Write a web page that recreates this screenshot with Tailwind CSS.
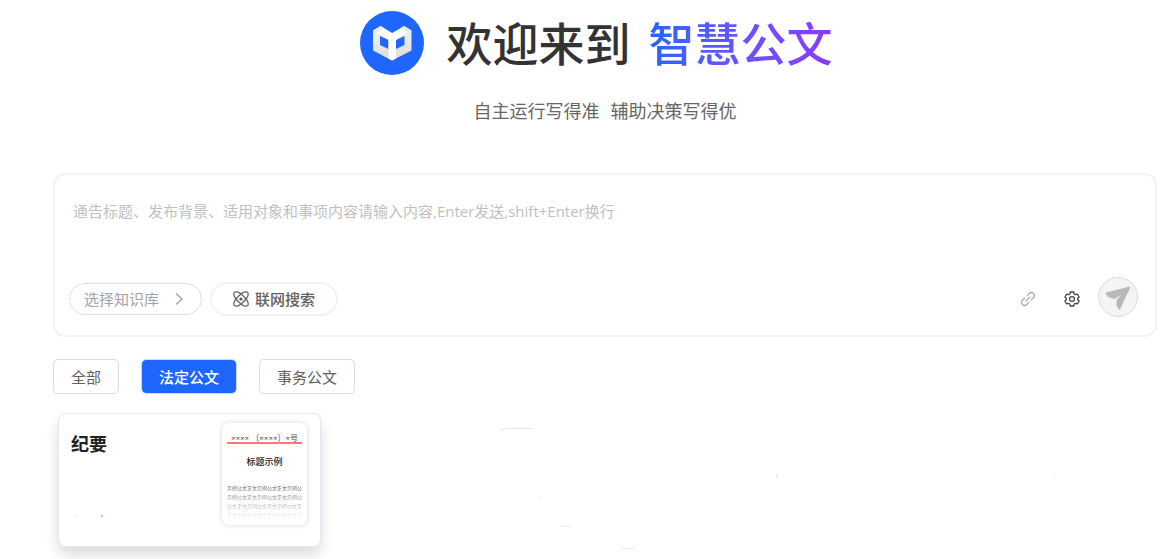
<!DOCTYPE html>
<html lang="zh-CN">
<head>
<meta charset="utf-8">
<meta name="viewport" content="width=device-width, initial-scale=1">
<title>智慧公文</title>
<script src="https://cdn.jsdelivr.net/npm/@tailwindcss/browser@4"></script>
</head>
<body class="min-h-screen overflow-hidden bg-white pl-[53px] pr-[14px] font-['Open_Sans','Noto_Sans_CJK_SC',sans-serif] text-[#606266]">
<header class="flex flex-col items-center pt-[11px]">
  <div class="flex h-16 items-center pr-[18px]">
    <svg class="size-16 shrink-0" viewBox="0 0 64 64" aria-hidden="true">
      <defs>
        <linearGradient id="lf" x1="0" y1="0" x2="0" y2="1"><stop offset="0" stop-color="#f0f0f1"/><stop offset="1" stop-color="#dcdcdd"/></linearGradient>
      </defs>
      <circle cx="32" cy="32" r="32" fill="#1f66ff"/>
      <path fill-rule="evenodd" fill="url(#lf)" d="M13 19.500L32 28V49.500L13 39.500ZM20 25V34L28.500 38V29Z"/>
      <path fill-rule="evenodd" fill="url(#lf)" d="M51.500 19.500L32 28V49.500L51.500 39.500ZM44.500 25V34L36 38V29Z"/>
      <path fill="#fff" d="M13 19.500L20.500 15L32.200 22L44 15L51.500 19.500L36 28.500V47.500L32.200 49.500L28.500 47.500V28.500Z"/>
      <path fill="#e9e9ea" d="M13 19.500L20.500 15L24 17L17 21.500ZM51.500 19.500L44 15L40.500 17L47.500 21.500Z"/>
    </svg>
    <h1 class="ml-[23px] flex gap-[18px] whitespace-nowrap text-[46px] leading-[62px] font-medium text-[#333]">
      <span>欢迎来到</span>
      <span class="bg-linear-to-r from-[#1f66ff] to-[#8a38ff] bg-clip-text text-transparent">智慧公文</span>
    </h1>
  </div>
  <p class="mt-6 flex gap-[11px] text-[18px] leading-6 text-[#666]"><span>自主运行写得准</span><span>辅助决策写得优</span></p>
</header>

<main>
  <form class="mt-[50px] flex flex-col rounded-xl border-2 border-[#f3f3f4] px-[14px] pt-[22px] pb-[18px]">
    <textarea aria-label="公文内容" rows="3" class="block h-20 w-full resize-none px-1 text-[15px] leading-7 outline-none placeholder:text-[#bfbfbf]" placeholder="通告标题、发布背景、适用对象和事项内容请输入内容,Enter发送,shift+Enter换行"></textarea>
    <div class="flex h-10 items-center">
      <button type="button" class="mt-1 flex h-8 items-center gap-3 rounded-full border border-[#dcdfe6] px-[14px] text-[15px] text-[#a0a3aa]">
        <span>选择知识库</span>
        <svg class="size-4" viewBox="0 0 16 16" fill="none" stroke="currentColor" stroke-width="1.400" aria-hidden="true"><path d="M5 2.500L11 8L5 13.500"/></svg>
      </button>
      <button type="button" class="mt-1 ml-2 flex h-[34px] items-center gap-[6px] rounded-full border-2 border-[#f3f3f4] px-[21px] text-[15px] font-medium text-[#606060]">
        <svg class="size-4" viewBox="0 0 16 16" fill="none" stroke="#666" stroke-width="1.300" aria-hidden="true">
          <path d="M8 3C10.500 .7 13.600 .3 14.600 1.400C15.700 2.500 15.300 5.500 13 8C15.300 10.500 15.700 13.500 14.600 14.600C13.600 15.700 10.500 15.300 8 13C5.500 15.300 2.400 15.700 1.400 14.600C.3 13.500 .7 10.500 3 8C.7 5.500 .3 2.500 1.400 1.400C2.400 .3 5.500 .7 8 3Z"/>
          <path d="M8 3C10 4.600 11.600 6.200 13 8C11.600 9.800 10 11.400 8 13C6 11.400 4.400 9.800 3 8C4.400 6.200 6 4.600 8 3Z"/>
          <circle cx="8" cy="8" r="1.600" fill="#555" stroke="none"/>
        </svg>
        <span>联网搜索</span>
      </button>
      <div class="ml-auto flex items-center">
        <button type="button" aria-label="添加链接" class="mt-1 p-0 text-[#aaa]">
          <svg class="size-4" viewBox="0 0 16 16" fill="none" stroke="currentColor" stroke-width="1.300" stroke-linecap="round" aria-hidden="true">
            <path d="M7.200 4.600L9.300 2.500A2.960 2.960 0 0 1 13.500 6.700L11.400 8.800M8.800 11.400L6.700 13.500A2.960 2.960 0 0 1 2.500 9.300L4.600 7.200M5.900 10.100L10.100 5.900"/>
          </svg>
        </button>
        <button type="button" aria-label="设置" class="mt-1 ml-7 p-0 text-[#444]">
          <svg class="size-4" viewBox="0 0 16 16" fill="none" stroke="currentColor" stroke-width="1.300" stroke-linejoin="round" aria-hidden="true">
            <path d="M6.300 1H9.700L10.200 3L11.400 3.700L13.400 3.100L15.100 6L13.600 7.400V8.600L15.100 10L13.400 12.900L11.400 12.300L10.200 13L9.700 15H6.300L5.800 13L4.600 12.300L2.600 12.900L.9 10L2.400 8.600V7.400L.9 6L2.600 3.100L4.600 3.700L5.800 3Z"/>
            <circle cx="8" cy="8" r="2.400"/>
          </svg>
        </button>
        <button type="submit" aria-label="发送" class="ml-[18px] mr-[3px] flex size-10 items-center justify-center rounded-full border border-[#dcdcdc] bg-[#f4f4f4]">
          <svg class="size-[26px]" viewBox="0 0 26 26" fill="#b8b8b8" stroke="#b8b8b8" stroke-linejoin="round" aria-hidden="true"><path d="M25 3L1 9L3 12.500L9.500 14.500L17 10L12 16.500L12 22L14.500 25.500Z"/></svg>
        </button>
      </div>
    </div>
  </form>

  <nav aria-label="公文类型" class="mt-[22px] flex gap-[22px] text-[15px] leading-5">
    <button type="button" class="h-[35px] rounded-[5px] border border-[#dcdcdc] px-[17px] text-[#606060]">全部</button>
    <button type="button" aria-pressed="true" class="h-[35px] rounded-[5px] border border-[#c9dafc] bg-[#1f66ff] bg-clip-padding px-[17px] font-medium text-white">法定公文</button>
    <button type="button" class="h-[35px] rounded-[5px] border border-[#dcdcdc] px-[17px] text-[#606060]">事务公文</button>
  </nav>

  <section class="mt-[19px] ml-[5px] flex items-start">
    <article class="flex h-[134px] w-[263px] shrink-0 justify-between rounded-[8px] border border-[#e6e7ee] bg-white pt-2 pr-3 pl-3 shadow-[0_8px_14px_rgba(0,0,0,0.14)]">
      <div class="flex flex-col">
        <h2 class="mt-2 text-[18px] leading-7 font-bold text-[#222]">纪要</h2>
        <svg class="mt-[54px] h-2 w-12" viewBox="0 0 48 8" aria-hidden="true"><circle cx="4" cy="4" r=".6" fill="#aac0ff"/><circle cx="31" cy="4" r=".8" fill="#3c66ff"/></svg>
      </div>
      <div class="flex h-[104px] w-[87px] flex-col overflow-hidden rounded-[8px] border border-[#eee] px-[5px] pt-[10px] shadow-[0_0_4px_rgba(0,0,0,0.12)]">
        <p class="border-b-2 border-[#f77] text-center text-[8px] leading-[9px] whitespace-nowrap text-[#444]">×××× 〔××××〕×号</p>
        <h3 class="mt-3 text-center text-[9px] leading-3 font-medium text-[#222]">标题示例</h3>
        <div class="mt-4 mask-b-from-0% overflow-hidden text-[5px] leading-[9px] whitespace-nowrap text-[#555]">
          <p>示例公文正文示例公文正文示例公</p>
          <p>示例公文正文示例公文正文示例公</p>
          <p>公文正文示例公文正文示例公文正</p>
          <p>正文示例公文正文示例公文正文示</p>
        </div>
      </div>
    </article>
    <svg class="ml-[179px] h-[140px] w-[560px]" viewBox="0 0 560 140" fill="none" stroke="#e3e3e3" aria-hidden="true">
      <path d="M1 18L5 15.500H32M277 61v4" stroke-width="1.200"/>
      <path d="M39 85l2-1M60 113l11 1M122 135.500h12M554 61h2" stroke="#eaeaea"/>
    </svg>
  </section>
</main>
</body>
</html>
